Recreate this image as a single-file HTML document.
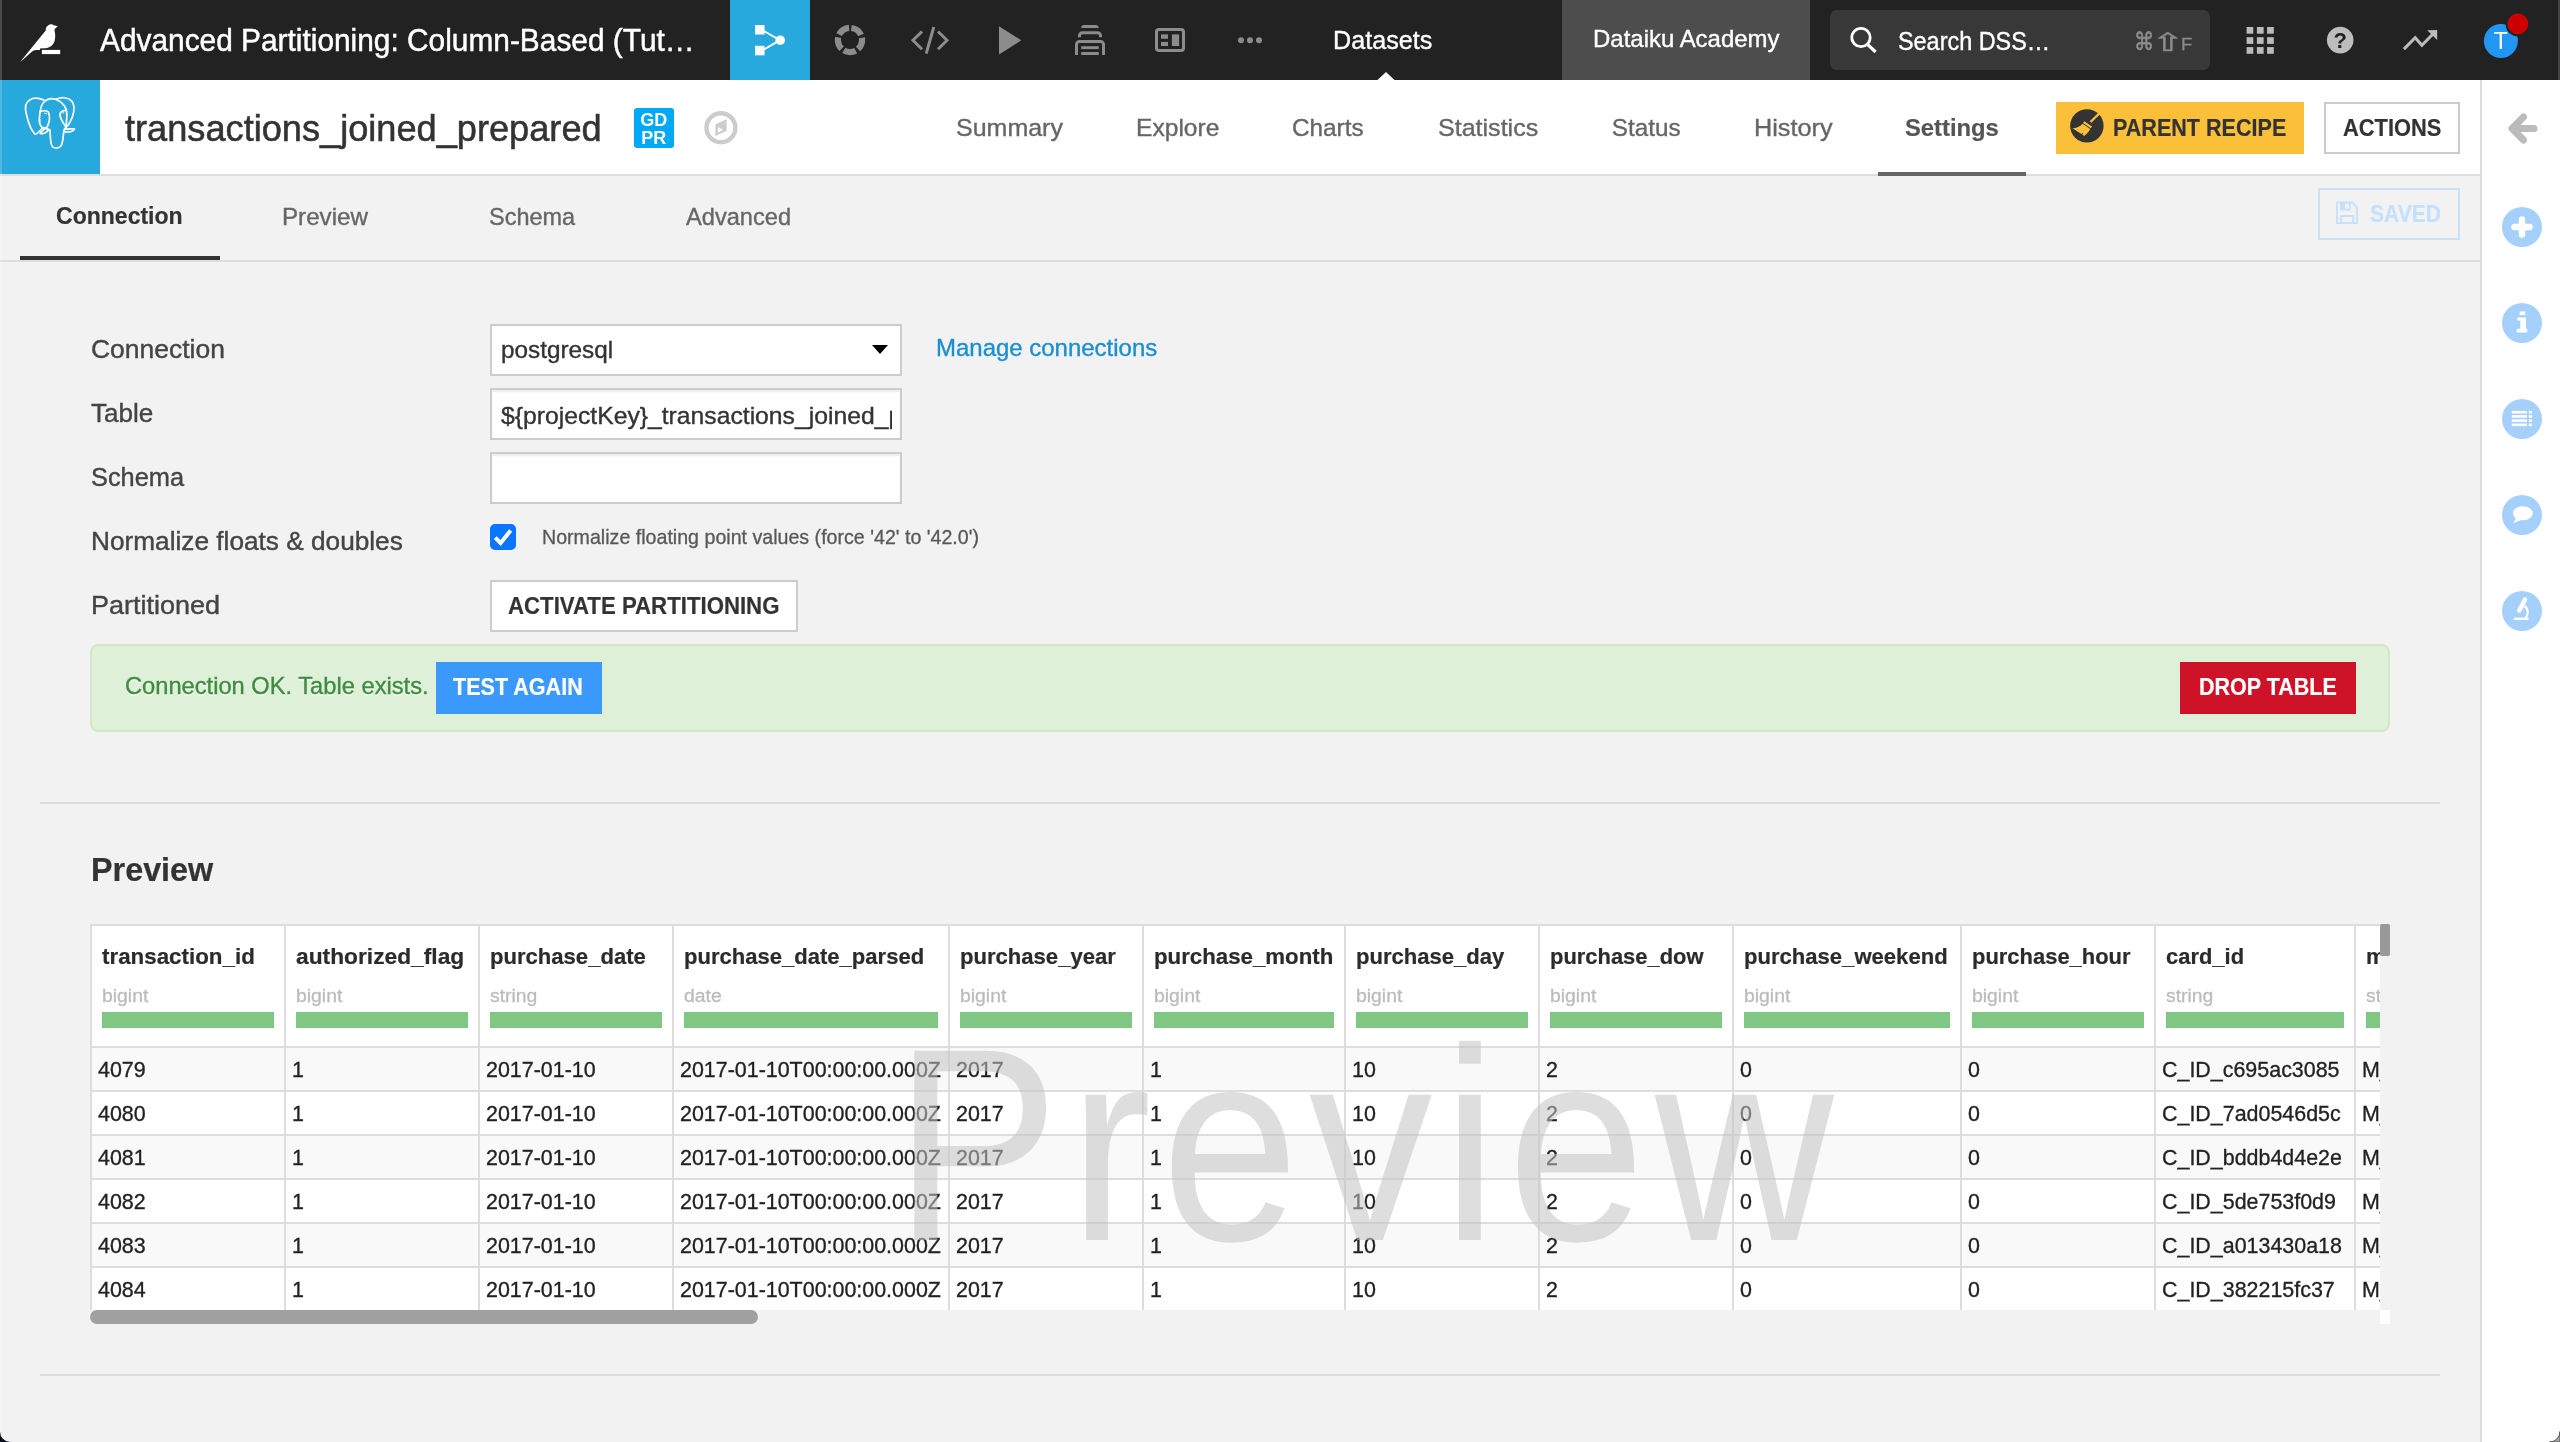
<!DOCTYPE html><html lang="en"><head><meta charset="utf-8"><title>transactions_joined_prepared - Settings</title>
<style>
html,body{margin:0;padding:0}
body{width:2560px;height:1442px;overflow:hidden;background:#f2f2f2;font-family:"Liberation Sans",sans-serif;position:relative}
#root{position:absolute;left:0;top:0;width:2560px;height:1442px;overflow:hidden;transform:translateZ(0)}
.a{position:absolute}
.t{position:absolute;white-space:nowrap;line-height:1;transform-origin:0 0;-webkit-text-stroke:.015em}
.b{position:absolute;box-sizing:border-box}
svg{position:absolute;overflow:visible}
#tbl{position:absolute;left:90px;top:924px;width:2290px;height:386px;overflow:hidden}
#tbl .t{font-size:22.5px;color:#2b2b2b}
#tbl .c{font-size:21.6px;color:#222}
.hn{font-weight:700;-webkit-text-stroke:.2px}
#tbl .ty{color:#bbb}
.bar{position:absolute;height:16px;top:88px;background:#81c784}
.vl{position:absolute;width:2px;top:0;height:386px;background:#ddd}
.hl{position:absolute;left:0;width:2290px;height:2px;background:#ddd}
.row{position:absolute;left:0;width:2290px;height:42px}

</style></head><body><div id="root">
<div class="a" style="left:0;top:0;width:2560px;height:80px;background:#222"></div>
<div class="a" style="left:730px;top:0;width:80px;height:80px;background:#28a9dd"></div>
<div class="a" style="left:1562px;top:0;width:248px;height:80px;background:#4d4d4d"></div>
<div class="a" style="left:1830px;top:10px;width:380px;height:60px;background:#383838;border-radius:7px"></div>
<div class="a" style="left:0;top:80px;width:2480px;height:94px;background:#fff"></div>
<div class="a" style="left:0;top:174px;width:2480px;height:2px;background:#ddd"></div>
<div class="a" style="left:0;top:80px;width:100px;height:94px;background:#28a9dd"></div>
<div class="a" style="left:2480px;top:80px;width:80px;height:1362px;background:#fff"></div>
<div class="a" style="left:2480px;top:80px;width:2px;height:1362px;background:#ddd"></div>
<div class="a" style="left:634px;top:108px;width:40px;height:40px;background:#03a9f4;border-radius:3px"></div>
<div class="a" style="left:1878px;top:172px;width:148px;height:4px;background:#666"></div>
<div class="a" style="left:2056px;top:102px;width:248px;height:52px;background:#fbc03a"></div>
<div class="b" style="left:2324px;top:102px;width:136px;height:52px;background:#fff;border:2px solid #ccc"></div>
<div class="a" style="left:0;top:260px;width:2480px;height:2px;background:#ddd"></div>
<div class="a" style="left:20px;top:256px;width:200px;height:4px;background:#333"></div>
<div class="b" style="left:2318px;top:188px;width:142px;height:52px;border:2px solid #c9e2fc"></div>
<div class="b" style="left:490px;top:324px;width:412px;height:52px;background:#fff;border:2px solid #ccc"></div>
<div class="b" style="left:490px;top:388px;width:412px;height:52px;background:#fff;border:2px solid #ccc;box-shadow:inset 0 2px 2px rgba(0,0,0,.075)"></div>
<div class="b" style="left:490px;top:452px;width:412px;height:52px;background:#fff;border:2px solid #ccc;box-shadow:inset 0 2px 2px rgba(0,0,0,.075)"></div>
<svg style="left:872px;top:345px" width="16" height="9" viewBox="0 0 16 9"><path d="M0 0h16l-8 9z" fill="#000"/></svg>
<div class="a" style="left:490px;top:524px;width:26px;height:26px;background:#0a75ff;border-radius:5px"></div>
<svg style="left:490px;top:524px" width="26" height="26" viewBox="0 0 26 26"><path d="M5.2 13.6L10.6 19L20.6 6.6" fill="none" stroke="#fff" stroke-width="4"/></svg>
<div class="b" style="left:490px;top:580px;width:308px;height:52px;background:#fff;border:2px solid #ccc"></div>
<div class="b" style="left:90px;top:644px;width:2300px;height:88px;background:#dff0d8;border:2px solid #d3e9c4;border-radius:8px"></div>
<div class="a" style="left:436px;top:662px;width:166px;height:52px;background:#3b99fc"></div>
<div class="a" style="left:2180px;top:662px;width:176px;height:52px;background:#ce1228"></div>
<div class="a" style="left:40px;top:802px;width:2400px;height:2px;background:#ddd"></div>
<div class="a" style="left:40px;top:1374px;width:2400px;height:2px;background:#ddd"></div>
<div class="a" style="left:500px;top:392px;width:392px;height:44px;overflow:hidden"><span class="t" id="tin" style="left:1px;top:12.12px;font-size:24.31px;color:#333;transform:scaleX(1.0170)">${projectKey}_transactions_joined_prepared</span></div>
<div id="tbl">
<div class="a" style="left:0;top:0;width:2290px;height:122px;background:#fff"></div>
<div class="row" style="top:124px;background:#f9f9f9"></div>
<div class="row" style="top:168px;background:#fff"></div>
<div class="row" style="top:212px;background:#f9f9f9"></div>
<div class="row" style="top:256px;background:#fff"></div>
<div class="row" style="top:300px;background:#f9f9f9"></div>
<div class="row" style="top:344px;background:#fff"></div>
<div class="hl" style="top:0"></div><div class="hl" style="top:122px"></div>
<div class="hl" style="top:166px"></div>
<div class="hl" style="top:210px"></div>
<div class="hl" style="top:254px"></div>
<div class="hl" style="top:298px"></div>
<div class="hl" style="top:342px"></div>
<div class="vl" style="left:0px"></div>
<div class="vl" style="left:194px"></div>
<div class="vl" style="left:388px"></div>
<div class="vl" style="left:582px"></div>
<div class="vl" style="left:858px"></div>
<div class="vl" style="left:1052px"></div>
<div class="vl" style="left:1254px"></div>
<div class="vl" style="left:1448px"></div>
<div class="vl" style="left:1642px"></div>
<div class="vl" style="left:1870px"></div>
<div class="vl" style="left:2064px"></div>
<div class="vl" style="left:2264px"></div>
<span class="t hn" id="hn0" style="left:12px;top:21.85px;transform:scaleX(0.9935)">transaction_id</span>
<span class="t ty" id="ty0" style="left:12px;top:63.09px;font-size:18.8px;transform:scaleX(1.0311)">bigint</span>
<div class="bar" style="left:12px;width:172px"></div>
<span class="t hn" id="hn1" style="left:206px;top:21.85px;transform:scaleX(1.0120)">authorized_flag</span>
<span class="t ty" id="ty1" style="left:206px;top:63.09px;font-size:18.8px;transform:scaleX(1.0311)">bigint</span>
<div class="bar" style="left:206px;width:172px"></div>
<span class="t hn" id="hn2" style="left:400px;top:21.85px;transform:scaleX(0.9811)">purchase_date</span>
<span class="t ty" id="ty2" style="left:400px;top:63.09px;font-size:18.8px;transform:scaleX(1.0311)">string</span>
<div class="bar" style="left:400px;width:172px"></div>
<span class="t hn" id="hn3" style="left:594px;top:21.85px;transform:scaleX(0.9796)">purchase_date_parsed</span>
<span class="t ty" id="ty3" style="left:594px;top:63.09px;font-size:18.8px;transform:scaleX(1.0311)">date</span>
<div class="bar" style="left:594px;width:254px"></div>
<span class="t hn" id="hn4" style="left:870px;top:21.85px;transform:scaleX(0.9811)">purchase_year</span>
<span class="t ty" id="ty4" style="left:870px;top:63.09px;font-size:18.8px;transform:scaleX(1.0311)">bigint</span>
<div class="bar" style="left:870px;width:172px"></div>
<span class="t hn" id="hn5" style="left:1064px;top:21.85px;transform:scaleX(0.9890)">purchase_month</span>
<span class="t ty" id="ty5" style="left:1064px;top:63.09px;font-size:18.8px;transform:scaleX(1.0311)">bigint</span>
<div class="bar" style="left:1064px;width:180px"></div>
<span class="t hn" id="hn6" style="left:1266px;top:21.85px;transform:scaleX(0.9801)">purchase_day</span>
<span class="t ty" id="ty6" style="left:1266px;top:63.09px;font-size:18.8px;transform:scaleX(1.0311)">bigint</span>
<div class="bar" style="left:1266px;width:172px"></div>
<span class="t hn" id="hn7" style="left:1460px;top:21.85px;transform:scaleX(0.9747)">purchase_dow</span>
<span class="t ty" id="ty7" style="left:1460px;top:63.09px;font-size:18.8px;transform:scaleX(1.0311)">bigint</span>
<div class="bar" style="left:1460px;width:172px"></div>
<span class="t hn" id="hn8" style="left:1654px;top:21.85px;transform:scaleX(0.9808)">purchase_weekend</span>
<span class="t ty" id="ty8" style="left:1654px;top:63.09px;font-size:18.8px;transform:scaleX(1.0311)">bigint</span>
<div class="bar" style="left:1654px;width:206px"></div>
<span class="t hn" id="hn9" style="left:1882px;top:21.85px;transform:scaleX(0.9755)">purchase_hour</span>
<span class="t ty" id="ty9" style="left:1882px;top:63.09px;font-size:18.8px;transform:scaleX(1.0311)">bigint</span>
<div class="bar" style="left:1882px;width:172px"></div>
<span class="t hn" id="hn10" style="left:2076px;top:21.85px;transform:scaleX(0.9750)">card_id</span>
<span class="t ty" id="ty10" style="left:2076px;top:63.09px;font-size:18.8px;transform:scaleX(1.0311)">string</span>
<div class="bar" style="left:2076px;width:178px"></div>
<span class="t hn" id="hn11" style="left:2276px;top:21.85px;transform:scaleX(0.9839)">merchant_id</span>
<span class="t ty" id="ty11" style="left:2276px;top:63.09px;font-size:18.8px;transform:scaleX(1.0311)">string</span>
<div class="bar" style="left:2276px;width:184px"></div>
<span class="t c" id="c0_0" style="left:8px;top:135.32px;transform:scaleX(0.9924)">4079</span>
<span class="t c" id="c0_1" style="left:202px;top:135.32px;transform:scaleX(0.9924)">1</span>
<span class="t c" id="c0_2" style="left:396px;top:135.32px;transform:scaleX(0.9924)">2017-01-10</span>
<span class="t c" id="c0_3" style="left:590px;top:135.32px;transform:scaleX(0.9924)">2017-01-10T00:00:00.000Z</span>
<span class="t c" id="c0_4" style="left:866px;top:135.32px;transform:scaleX(0.9924)">2017</span>
<span class="t c" id="c0_5" style="left:1060px;top:135.32px;transform:scaleX(0.9924)">1</span>
<span class="t c" id="c0_6" style="left:1262px;top:135.32px;transform:scaleX(0.9924)">10</span>
<span class="t c" id="c0_7" style="left:1456px;top:135.32px;transform:scaleX(0.9924)">2</span>
<span class="t c" id="c0_8" style="left:1650px;top:135.32px;transform:scaleX(0.9924)">0</span>
<span class="t c" id="c0_9" style="left:1878px;top:135.32px;transform:scaleX(0.9924)">0</span>
<span class="t c" id="c0_10" style="left:2072px;top:135.32px;transform:scaleX(0.9924)">C_ID_c695ac3085</span>
<span class="t c" id="c0_11" style="left:2272px;top:135.32px;transform:scaleX(0.9924)">M_ID_00a6ca8a8a</span>
<span class="t c" id="c1_0" style="left:8px;top:179.32px;transform:scaleX(0.9924)">4080</span>
<span class="t c" id="c1_1" style="left:202px;top:179.32px;transform:scaleX(0.9924)">1</span>
<span class="t c" id="c1_2" style="left:396px;top:179.32px;transform:scaleX(0.9924)">2017-01-10</span>
<span class="t c" id="c1_3" style="left:590px;top:179.32px;transform:scaleX(0.9924)">2017-01-10T00:00:00.000Z</span>
<span class="t c" id="c1_4" style="left:866px;top:179.32px;transform:scaleX(0.9924)">2017</span>
<span class="t c" id="c1_5" style="left:1060px;top:179.32px;transform:scaleX(0.9924)">1</span>
<span class="t c" id="c1_6" style="left:1262px;top:179.32px;transform:scaleX(0.9924)">10</span>
<span class="t c" id="c1_7" style="left:1456px;top:179.32px;transform:scaleX(0.9924)">2</span>
<span class="t c" id="c1_8" style="left:1650px;top:179.32px;transform:scaleX(0.9924)">0</span>
<span class="t c" id="c1_9" style="left:1878px;top:179.32px;transform:scaleX(0.9924)">0</span>
<span class="t c" id="c1_10" style="left:2072px;top:179.32px;transform:scaleX(0.9924)">C_ID_7ad0546d5c</span>
<span class="t c" id="c1_11" style="left:2272px;top:179.32px;transform:scaleX(0.9924)">M_ID_00a6ca8a8a</span>
<span class="t c" id="c2_0" style="left:8px;top:223.32px;transform:scaleX(0.9924)">4081</span>
<span class="t c" id="c2_1" style="left:202px;top:223.32px;transform:scaleX(0.9924)">1</span>
<span class="t c" id="c2_2" style="left:396px;top:223.32px;transform:scaleX(0.9924)">2017-01-10</span>
<span class="t c" id="c2_3" style="left:590px;top:223.32px;transform:scaleX(0.9924)">2017-01-10T00:00:00.000Z</span>
<span class="t c" id="c2_4" style="left:866px;top:223.32px;transform:scaleX(0.9924)">2017</span>
<span class="t c" id="c2_5" style="left:1060px;top:223.32px;transform:scaleX(0.9924)">1</span>
<span class="t c" id="c2_6" style="left:1262px;top:223.32px;transform:scaleX(0.9924)">10</span>
<span class="t c" id="c2_7" style="left:1456px;top:223.32px;transform:scaleX(0.9924)">2</span>
<span class="t c" id="c2_8" style="left:1650px;top:223.32px;transform:scaleX(0.9924)">0</span>
<span class="t c" id="c2_9" style="left:1878px;top:223.32px;transform:scaleX(0.9924)">0</span>
<span class="t c" id="c2_10" style="left:2072px;top:223.32px;transform:scaleX(0.9924)">C_ID_bddb4d4e2e</span>
<span class="t c" id="c2_11" style="left:2272px;top:223.32px;transform:scaleX(0.9924)">M_ID_00a6ca8a8a</span>
<span class="t c" id="c3_0" style="left:8px;top:267.32px;transform:scaleX(0.9924)">4082</span>
<span class="t c" id="c3_1" style="left:202px;top:267.32px;transform:scaleX(0.9924)">1</span>
<span class="t c" id="c3_2" style="left:396px;top:267.32px;transform:scaleX(0.9924)">2017-01-10</span>
<span class="t c" id="c3_3" style="left:590px;top:267.32px;transform:scaleX(0.9924)">2017-01-10T00:00:00.000Z</span>
<span class="t c" id="c3_4" style="left:866px;top:267.32px;transform:scaleX(0.9924)">2017</span>
<span class="t c" id="c3_5" style="left:1060px;top:267.32px;transform:scaleX(0.9924)">1</span>
<span class="t c" id="c3_6" style="left:1262px;top:267.32px;transform:scaleX(0.9924)">10</span>
<span class="t c" id="c3_7" style="left:1456px;top:267.32px;transform:scaleX(0.9924)">2</span>
<span class="t c" id="c3_8" style="left:1650px;top:267.32px;transform:scaleX(0.9924)">0</span>
<span class="t c" id="c3_9" style="left:1878px;top:267.32px;transform:scaleX(0.9924)">0</span>
<span class="t c" id="c3_10" style="left:2072px;top:267.32px;transform:scaleX(0.9924)">C_ID_5de753f0d9</span>
<span class="t c" id="c3_11" style="left:2272px;top:267.32px;transform:scaleX(0.9924)">M_ID_00a6ca8a8a</span>
<span class="t c" id="c4_0" style="left:8px;top:311.32px;transform:scaleX(0.9924)">4083</span>
<span class="t c" id="c4_1" style="left:202px;top:311.32px;transform:scaleX(0.9924)">1</span>
<span class="t c" id="c4_2" style="left:396px;top:311.32px;transform:scaleX(0.9924)">2017-01-10</span>
<span class="t c" id="c4_3" style="left:590px;top:311.32px;transform:scaleX(0.9924)">2017-01-10T00:00:00.000Z</span>
<span class="t c" id="c4_4" style="left:866px;top:311.32px;transform:scaleX(0.9924)">2017</span>
<span class="t c" id="c4_5" style="left:1060px;top:311.32px;transform:scaleX(0.9924)">1</span>
<span class="t c" id="c4_6" style="left:1262px;top:311.32px;transform:scaleX(0.9924)">10</span>
<span class="t c" id="c4_7" style="left:1456px;top:311.32px;transform:scaleX(0.9924)">2</span>
<span class="t c" id="c4_8" style="left:1650px;top:311.32px;transform:scaleX(0.9924)">0</span>
<span class="t c" id="c4_9" style="left:1878px;top:311.32px;transform:scaleX(0.9924)">0</span>
<span class="t c" id="c4_10" style="left:2072px;top:311.32px;transform:scaleX(0.9924)">C_ID_a013430a18</span>
<span class="t c" id="c4_11" style="left:2272px;top:311.32px;transform:scaleX(0.9924)">M_ID_00a6ca8a8a</span>
<span class="t c" id="c5_0" style="left:8px;top:355.32px;transform:scaleX(0.9924)">4084</span>
<span class="t c" id="c5_1" style="left:202px;top:355.32px;transform:scaleX(0.9924)">1</span>
<span class="t c" id="c5_2" style="left:396px;top:355.32px;transform:scaleX(0.9924)">2017-01-10</span>
<span class="t c" id="c5_3" style="left:590px;top:355.32px;transform:scaleX(0.9924)">2017-01-10T00:00:00.000Z</span>
<span class="t c" id="c5_4" style="left:866px;top:355.32px;transform:scaleX(0.9924)">2017</span>
<span class="t c" id="c5_5" style="left:1060px;top:355.32px;transform:scaleX(0.9924)">1</span>
<span class="t c" id="c5_6" style="left:1262px;top:355.32px;transform:scaleX(0.9924)">10</span>
<span class="t c" id="c5_7" style="left:1456px;top:355.32px;transform:scaleX(0.9924)">2</span>
<span class="t c" id="c5_8" style="left:1650px;top:355.32px;transform:scaleX(0.9924)">0</span>
<span class="t c" id="c5_9" style="left:1878px;top:355.32px;transform:scaleX(0.9924)">0</span>
<span class="t c" id="c5_10" style="left:2072px;top:355.32px;transform:scaleX(0.9924)">C_ID_382215fc37</span>
<span class="t c" id="c5_11" style="left:2272px;top:355.32px;transform:scaleX(0.9924)">M_ID_00a6ca8a8a</span>
</div>
<div class="a" style="left:2380px;top:924px;width:10px;height:32px;background:#999;border-radius:2px"></div>
<div class="a" style="left:2380px;top:1310px;width:10px;height:14px;background:#fff"></div>
<div class="a" style="left:90px;top:1310px;width:668px;height:14px;background:#a0a0a0;border-radius:7px"></div>
<span class="t" id="wm" style="left:894px;top:1007.2px;font-size:275px;letter-spacing:11px;-webkit-text-stroke:0;color:rgba(195,195,195,.55);transform:scaleX(.9)">Preview</span>
<span class="t" id="t0" style="left:100.00px;top:25.49px;font-size:31.32px;font-weight:400;color:#fff;transform:scaleX(0.9535)">Advanced Partitioning: Column-Based (Tut…</span>
<span class="t" id="t1" style="left:1333.00px;top:27.34px;font-size:26.18px;font-weight:400;color:#fff;transform:scaleX(0.9612)">Datasets</span>
<span class="t" id="t2" style="left:1593.00px;top:26.92px;font-size:24.31px;font-weight:400;color:#fff;transform:scaleX(0.9868)">Dataiku Academy</span>
<span class="t" id="t3" style="left:1898.00px;top:27.84px;font-size:26.18px;font-weight:400;color:#fff;transform:scaleX(0.8941)">Search DSS…</span>
<span class="t" id="t4" style="left:2133.50px;top:30.40px;font-size:24.68px;font-weight:400;color:#8c8c8c;font-family:'DejaVu Sans', sans-serif;-webkit-text-stroke:.7px;transform:scaleX(0.8200)">⌘</span>
<span class="t" id="t5" style="left:2150.70px;top:30.57px;font-size:24.96px;font-weight:400;color:#8c8c8c;font-family:'DejaVu Sans', sans-serif;-webkit-text-stroke:.35px;transform:scaleX(1.5952)">⇧</span>
<span class="t" id="t6" style="left:2180.50px;top:36.24px;font-size:17.20px;font-weight:400;color:#8c8c8c;transform:scaleX(1.0727)">F</span>
<span class="t" id="t7" style="left:125.00px;top:110.34px;font-size:37.40px;font-weight:400;color:#333;transform:scaleX(0.9675)">transactions_joined_prepared</span>
<span class="t" id="t8" style="left:955.50px;top:115.67px;font-size:24.31px;font-weight:400;color:#666;transform:scaleX(1.0288)">Summary</span>
<span class="t" id="t9" style="left:1136.00px;top:115.67px;font-size:24.31px;font-weight:400;color:#666;transform:scaleX(1.0122)">Explore</span>
<span class="t" id="t10" style="left:1292.00px;top:115.67px;font-size:24.31px;font-weight:400;color:#666;transform:scaleX(1.0000)">Charts</span>
<span class="t" id="t11" style="left:1437.50px;top:115.67px;font-size:24.31px;font-weight:400;color:#666;transform:scaleX(1.0309)">Statistics</span>
<span class="t" id="t12" style="left:1611.75px;top:115.67px;font-size:24.31px;font-weight:400;color:#666;transform:scaleX(1.0000)">Status</span>
<span class="t" id="t13" style="left:1754.25px;top:115.67px;font-size:24.31px;font-weight:400;color:#666;transform:scaleX(1.0395)">History</span>
<span class="t" id="t14" style="left:1905.00px;top:115.67px;font-size:24.31px;font-weight:700;color:#555;-webkit-text-stroke:.2px;transform:scaleX(0.9792)">Settings</span>
<span class="t" id="t15" style="left:2113.00px;top:115.67px;font-size:24.31px;font-weight:700;color:#333;-webkit-text-stroke:.2px;transform:scaleX(0.8872)">PARENT RECIPE</span>
<span class="t" id="t16" style="left:2343.00px;top:115.67px;font-size:24.31px;font-weight:700;color:#333;-webkit-text-stroke:.2px;transform:scaleX(0.8991)">ACTIONS</span>
<span class="t" id="t17" style="left:56.00px;top:203.67px;font-size:24.31px;font-weight:700;color:#333;-webkit-text-stroke:.2px;transform:scaleX(0.9478)">Connection</span>
<span class="t" id="t18" style="left:282.00px;top:205.17px;font-size:24.31px;font-weight:400;color:#666;transform:scaleX(0.9942)">Preview</span>
<span class="t" id="t19" style="left:488.75px;top:205.17px;font-size:24.31px;font-weight:400;color:#666;transform:scaleX(0.9663)">Schema</span>
<span class="t" id="t20" style="left:686.00px;top:205.17px;font-size:24.31px;font-weight:400;color:#666;transform:scaleX(0.9722)">Advanced</span>
<span class="t" id="t21" style="left:2370.00px;top:201.62px;font-size:24.31px;font-weight:700;color:#c4e0fc;-webkit-text-stroke:.2px;transform:scaleX(0.8659)">SAVED</span>
<span class="t" id="t22" style="left:90.50px;top:336.09px;font-size:26.18px;font-weight:400;color:#444;transform:scaleX(1.0114)">Connection</span>
<span class="t" id="t23" style="left:90.50px;top:399.84px;font-size:26.18px;font-weight:400;color:#444;transform:scaleX(0.9960)">Table</span>
<span class="t" id="t24" style="left:90.50px;top:463.84px;font-size:26.18px;font-weight:400;color:#444;transform:scaleX(0.9688)">Schema</span>
<span class="t" id="t25" style="left:90.50px;top:527.84px;font-size:26.18px;font-weight:400;color:#444;transform:scaleX(1.0016)">Normalize floats &amp; doubles</span>
<span class="t" id="t26" style="left:90.50px;top:591.59px;font-size:26.18px;font-weight:400;color:#444;transform:scaleX(1.0320)">Partitioned</span>
<span class="t" id="t27" style="left:501.00px;top:337.67px;font-size:24.31px;font-weight:400;color:#333;transform:scaleX(1.0000)">postgresql</span>
<span class="t" id="t28" style="left:936.25px;top:335.72px;font-size:24.31px;font-weight:400;color:#1a8fd1;transform:scaleX(0.9866)">Manage connections</span>
<span class="t" id="t29" style="left:542.00px;top:526.59px;font-size:20.57px;font-weight:400;color:#585858;transform:scaleX(0.9541)">Normalize floating point values (force '42' to '42.0')</span>
<span class="t" id="t30" style="left:507.50px;top:593.92px;font-size:24.31px;font-weight:700;color:#333;-webkit-text-stroke:.2px;transform:scaleX(0.9141)">ACTIVATE PARTITIONING</span>
<span class="t" id="t31" style="left:124.50px;top:673.67px;font-size:24.31px;font-weight:400;color:#3f8c41;text-shadow:0 2px 0 rgba(255,255,255,.5);transform:scaleX(0.9744)">Connection OK. Table exists.</span>
<span class="t" id="t32" style="left:453.00px;top:675.42px;font-size:24.31px;font-weight:700;color:#fff;-webkit-text-stroke:.2px;transform:scaleX(0.8870)">TEST AGAIN</span>
<span class="t" id="t33" style="left:2199.00px;top:674.92px;font-size:24.31px;font-weight:700;color:#fff;-webkit-text-stroke:.2px;transform:scaleX(0.8846)">DROP TABLE</span>
<span class="t" id="t34" style="left:91.25px;top:852.76px;font-size:33.66px;font-weight:700;color:#333;-webkit-text-stroke:.2px;transform:scaleX(0.9606)">Preview</span>
<svg style="left:0;top:0" width="2560" height="1442" viewBox="0 0 2560 1442">
<!-- dataiku bird -->
<path fill="#fff" d="M20.1 62.1L45.9 30.3C45.5 28 46.5 25.5 50.4 24.2C52 24 53 24.6 53.9 25.3L57.9 26.3L55.4 28.2C54.5 29 54.6 30 54.6 31C55 33 55.4 35 55.2 36.4C55 39 54.8 41 53.9 42.5C52.8 45 51 46.3 49.7 47C48 48 46 48.2 44.3 48.2L40.1 48.4L39.8 49.9C37 49.9 35 50 33.7 50.5C31 52 24 59 20.1 62.1Z"/>
<rect x="41.9" y="49.9" width="18.3" height="4.2" fill="#fff"/>
<!-- flow icon -->
<g fill="#fff" stroke="none"><rect x="755" y="25" width="9.5" height="9.5"/><rect x="755" y="45.8" width="9.5" height="9.5"/><circle cx="780.2" cy="40.2" r="4.8"/></g>
<path d="M763 30.5L780 40.2L763 50" fill="none" stroke="#fff" stroke-width="2"/>
<!-- analysis ring -->
<circle cx="850" cy="40" r="12.1" fill="none" stroke="#8c8c8c" stroke-width="6.2" stroke-dasharray="12.4 2.8" stroke-dashoffset="-1.4" transform="rotate(-90 850 40)"/>
<!-- code icon -->
<path d="M922 31.5L913 40.3L922 49.2M933.8 27L926.2 53.7M938 31.5L947 40.3L938 49.2" fill="none" stroke="#8c8c8c" stroke-width="3"/>
<!-- play -->
<path d="M999 26.2L1021.3 40.3L999 54.4Z" fill="#8c8c8c"/>
<!-- jobs -->
<g fill="none" stroke="#8c8c8c" stroke-width="3"><path d="M1076.5 55V44.5a3 3 0 0 1 3-3h21a3 3 0 0 1 3 3V55"/><path d="M1079.5 37.3V35.8a3 3 0 0 1 3-3h15a3 3 0 0 1 3 3v1.5"/></g>
<g fill="#8c8c8c"><path d="M1081.2 28a3 3 0 0 1 3-3h11.5a3 3 0 0 1 3 3z"/><rect x="1081.2" y="46.2" width="17.6" height="2.9"/><rect x="1081.2" y="52" width="17.6" height="3"/></g>
<!-- dashboard -->
<rect x="1156.5" y="29.5" width="27" height="21" rx="2.5" fill="none" stroke="#8c8c8c" stroke-width="3"/>
<g fill="#8c8c8c"><rect x="1161" y="34.4" width="7" height="4.4"/><rect x="1161" y="41.9" width="7" height="4.1"/><rect x="1171.9" y="34.4" width="7.2" height="11.6"/></g>
<!-- dots -->
<g fill="#8c8c8c"><circle cx="1241" cy="40.2" r="3"/><circle cx="1250" cy="40.2" r="3"/><circle cx="1259" cy="40.2" r="3"/></g>
<!-- caret under Datasets -->
<path d="M1377.5 80L1386 72L1394.5 80Z" fill="#fff"/>
<!-- search -->
<circle cx="1861" cy="37.5" r="9.2" fill="none" stroke="#fff" stroke-width="2.8"/><path d="M1867.5 44.3L1875.6 52" stroke="#fff" stroke-width="3.2" fill="none"/>
<!-- grid -->
<g fill="#bbb"><rect x="2246.6" y="27" width="6.7" height="6.7"/><rect x="2256.9" y="27" width="6.7" height="6.7"/><rect x="2267.1" y="27" width="6.7" height="6.7"/><rect x="2246.6" y="37.2" width="6.7" height="6.7"/><rect x="2256.9" y="37.2" width="6.7" height="6.7"/><rect x="2267.1" y="37.2" width="6.7" height="6.7"/><rect x="2246.6" y="47.1" width="6.7" height="6.7"/><rect x="2256.9" y="47.1" width="6.7" height="6.7"/><rect x="2267.1" y="47.1" width="6.7" height="6.7"/></g>
<!-- help -->
<circle cx="2340.2" cy="40.1" r="13.3" fill="#bdbdbd"/>
<text x="2340.2" y="48.3" font-family="Liberation Sans, sans-serif" font-weight="700" font-size="22" fill="#222" text-anchor="middle">?</text>
<!-- trend -->
<path d="M2403.9 49.1L2415.2 37.8L2421.9 45.2L2432.5 34.5" fill="none" stroke="#bbb" stroke-width="3"/><path d="M2427.2 30.3L2437.2 29.9L2437.2 39.9Z" fill="#bbb"/>
<!-- avatar -->
<circle cx="2500.9" cy="41" r="17" fill="#2196f3"/>
<text x="2500.9" y="49.2" font-family="Liberation Sans, sans-serif" font-size="23" fill="#fff" text-anchor="middle">T</text>
<circle cx="2517.9" cy="23.9" r="11.4" fill="#c00" stroke="#222" stroke-width="2"/>
<!-- postgres elephant -->
<g transform="translate(15 88) scale(0.048544)" fill="none" stroke="#fff" stroke-width="35" stroke-linecap="round" stroke-linejoin="round">
<path d="M590 245C500 210 380 200 310 240C220 290 200 400 230 520C270 700 340 880 410 950C440 970 500 900 560 830"/>
<path d="M505 700C495 620 510 540 520 470C530 350 600 240 740 220C880 215 1020 320 1060 460C1080 560 1060 700 1050 800"/>
<path d="M520 490C580 460 660 460 690 500C720 580 710 700 670 790C650 830 590 830 560 810C510 770 500 700 505 650"/>
<path d="M850 230C950 180 1100 190 1170 270C1240 350 1220 480 1180 600C1140 700 1090 780 1050 810"/>
<path d="M1050 460C1000 460 940 480 925 540C920 600 980 700 1040 790"/>
<path d="M560 830C620 840 700 830 720 870C730 950 720 1100 760 1190C790 1250 900 1260 950 1190C1000 1100 990 950 1010 870C1020 840 1040 820 1050 810"/>
<path d="M690 860C660 920 580 950 520 935C515 915 550 900 600 850"/>
<path d="M1020 850C1100 850 1180 840 1225 840C1220 890 1120 920 1020 900"/>
<path d="M610 522L650 528M985 510L1005 515" stroke-width="22"/>
</g>
<!-- GDPR text -->
<text font-family="Liberation Sans, sans-serif" font-weight="700" font-size="18" fill="#fff" text-anchor="middle"><tspan x="653.8" y="126.4">GD</tspan><tspan x="653.8" y="143.7">PR</tspan></text>
<!-- compass -->
<circle cx="720.9" cy="127.8" r="14.5" fill="none" stroke="#ccc" stroke-width="4.4"/>
<path d="M726.6 119.3V130.8L715.4 136V124.5Z" fill="#ccc"/><path d="M717.9 127V132.7L723.3 129.7Z" fill="#fff"/>
<!-- parent recipe icon -->
<circle cx="2086.9" cy="125.9" r="16.7" fill="#333"/>
<path d="M2099.6 113.2L2090.5 122" stroke="#fbc03a" stroke-width="2.3" fill="none"/>
<path d="M2084.2 121.3L2092 126.5L2090.8 128.3L2083 123.1Z" fill="#fbc03a"/>
<path d="M2082.6 123.8L2090.2 128.9C2089 131.5 2086.5 134 2084.2 135.9L2082.4 134.6L2083.6 132.4L2081.4 133.9L2072.5 128.3C2076.5 128.3 2080 126.6 2082.6 123.8Z" fill="#fbc03a"/>
<!-- right panel arrow -->
<path d="M2534 128.5H2512.5M2523.5 117L2512 128.5L2523.5 140" fill="none" stroke="#bbb" stroke-width="7" stroke-linecap="round" stroke-linejoin="round"/>
<!-- right panel circles -->
<g fill="#a6d0fc"><circle cx="2522" cy="227" r="20"/><circle cx="2522" cy="323" r="20"/><circle cx="2522" cy="419" r="20"/><circle cx="2522" cy="515" r="20"/><circle cx="2522" cy="611" r="20"/></g>
<path d="M2522 219.5V234.5M2514.5 227H2529.5" stroke="#fff" stroke-width="6.5" stroke-linecap="round" fill="none"/>
<!-- info -->
<g fill="#fff"><rect x="2519.6" y="311.4" width="5.6" height="3.7"/><path d="M2517.2 317.4H2526V328.8H2527.2V332.5H2516.7V328.8H2520.3V320.4H2517.2Z"/></g>
<!-- list -->
<g fill="#fff"><rect x="2511.8" y="410.9" width="15.1" height="2.6"/><rect x="2511.8" y="415.1" width="15.1" height="2.6"/><rect x="2511.8" y="419.3" width="15.1" height="2.6"/><rect x="2511.8" y="423.5" width="15.1" height="2.6"/><rect x="2528.8" y="410.9" width="3.2" height="2.6"/><rect x="2528.8" y="415.1" width="3.2" height="2.6"/><rect x="2528.8" y="419.3" width="3.2" height="2.6"/><rect x="2528.8" y="423.5" width="3.2" height="2.6"/></g>
<!-- chat -->
<ellipse cx="2522.8" cy="513.3" rx="9.9" ry="7" fill="#fff"/><path d="M2516.5 517L2513.3 523.2L2521 520Z" fill="#fff"/>
<!-- microscope -->
<g fill="none" stroke="#fff"><path d="M2513.8 618.8H2528.4" stroke-width="2.4"/><path d="M2525 599.5L2519.3 610.5" stroke-width="4.4" stroke-linecap="round"/><path d="M2524.5 606C2528.5 609 2528.8 614.5 2525.5 617.8" stroke-width="2.2"/></g>
<!-- saved floppy -->
<g fill="none" stroke="#c4e0fc" stroke-width="1.8" stroke-linejoin="round"><path d="M2336.9 202.3H2352.2L2357.1 207.6V223.1H2336.9Z"/><rect x="2341" y="216" width="12.2" height="7.1"/></g>
<path d="M2340.1 202.3H2350.6V210.6H2340.1ZM2345 203.4V208.8H2348.9V203.4Z" fill="#c4e0fc" fill-rule="evenodd"/>
<!-- window edges / screen corners -->
<rect x="0" y="0" width="2" height="1442" fill="rgba(255,255,255,.18)"/><rect x="2558" y="0" width="2" height="80" fill="rgba(255,255,255,.15)"/>
<path d="M0 1431.5A10.5 10.5 0 0 0 10.5 1442H0Z" fill="#0b1020"/>
<path d="M2560 1431.5A10.5 10.5 0 0 1 2549.5 1442H2560Z" fill="#aaa" stroke="#555" stroke-width="1"/>
</svg>

</div></body></html>
